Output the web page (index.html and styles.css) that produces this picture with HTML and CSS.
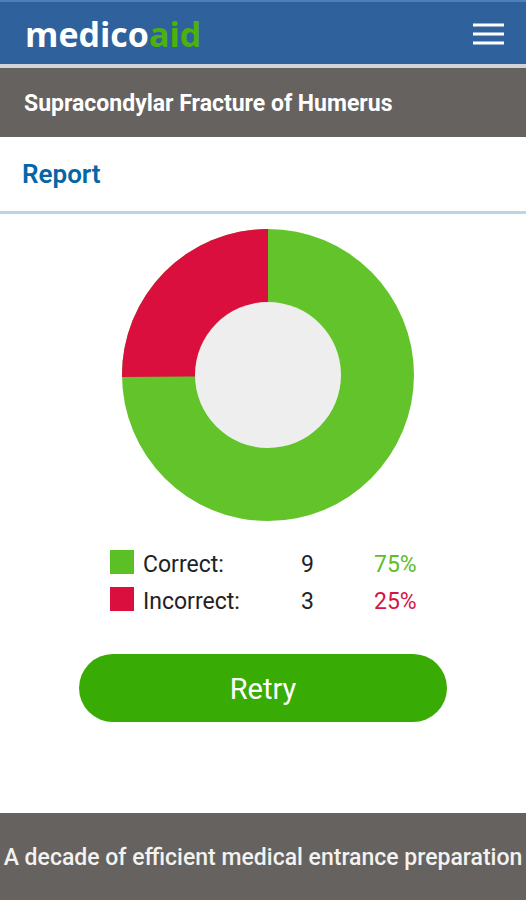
FILE: index.html
```html
<!DOCTYPE html>
<html lang="en">
<head>
    <meta charset="UTF-8">
    <meta name="viewport" content="width=device-width, initial-scale=1.0">
    <title>Medicoaid - Report</title>
    <link rel="stylesheet" href="styles.css">
</head>
<body>
    <header class="navbar">
        <a href="#" class="logo">medico<span>aid</span></a>
        <button class="menu-btn" type="button" aria-label="Menu">
            <svg width="31" height="22" viewBox="0 0 31 22">
                <path d="M0 2h31M0 11h31M0 20h31" stroke="#fff" stroke-width="3"/>
            </svg>
        </button>
    </header>

    <h1 class="topic">Supracondylar Fracture of Humerus</h1>
    <h2 class="report-title">Report</h2>

    <main class="report">
        <div class="result">
            <svg class="chart" viewBox="0 0 292 292" role="img" aria-label="75% correct, 25% incorrect">
                <circle cx="146" cy="146" r="146" fill="#62c42a"/>
                <path d="M146 146V0A146 146 0 0 0 0 148L146 147Z" fill="#db0f3d"/>
                <circle cx="146" cy="146" r="73" fill="#eeeeee"/>
            </svg>

            <table class="legend">
                <tr>
                    <td class="color"><span class="box correct"></span></td>
                    <th scope="row">Correct:</th>
                    <td class="count">9</td>
                    <td class="percent correct-text">75%</td>
                </tr>
                <tr>
                    <td class="color"><span class="box incorrect"></span></td>
                    <th scope="row">Incorrect:</th>
                    <td class="count">3</td>
                    <td class="percent incorrect-text">25%</td>
                </tr>
            </table>
        </div>

        <button class="retry-btn" type="button">Retry</button>
    </main>

    <footer class="footer">A decade of efficient medical entrance preparation</footer>
</body>
</html>
```

FILE: styles.css
```css
* {
    box-sizing: border-box;
}
body {
    margin: 0;
    min-height: 100vh;
    display: flex;
    flex-direction: column;
    font-family: Roboto, Arial, sans-serif;
    background-color: #fff;
    color: #222;
}
.navbar {
    display: flex;
    justify-content: space-between;
    align-items: center;
    height: 68px;
    padding: 2px 22px 0 25px;
    background-color: #2f629d;
    border-top: 2px solid #4c80b9;
    border-bottom: 4px solid #d3d4d8;
}
.logo {
    font-family: "Open Sans", sans-serif;
    font-size: 34px;
    font-weight: 700;
    line-height: 48px;
    color: #fff;
    text-decoration: none;
}
.logo span {
    color: #4db10c;
}
.menu-btn {
    padding: 0;
    border: none;
    background: none;
    cursor: pointer;
}
.menu-btn svg {
    display: block;
}
.topic {
    margin: 0;
    padding: 21px 24px 19px;
    font-size: 23px;
    font-weight: 700;
    line-height: 29px;
    background-color: #66625f;
    color: #fff;
}
.report-title {
    margin: 0;
    padding: 20px 22px;
    font-size: 26px;
    font-weight: 600;
    line-height: 34px;
    color: #0566a6;
    border-bottom: 3px solid #bcd5e6;
}
.report {
    flex: 1;
    padding: 15px 0 32px;
}
.result {
    width: 316px;
    margin: 0 auto;
    padding-left: 10px;
    box-sizing: content-box;
}
.chart {
    display: block;
    width: 292px;
    margin: 0 auto 25px;
}
.legend {
    width: 100%;
    border-collapse: collapse;
    table-layout: fixed;
    font-size: 23px;
    line-height: 37px;
}
.legend td,
.legend th {
    padding: 0;
    font-weight: 400;
    text-align: left;
}
.legend .color {
    width: 33px;
    padding-bottom: 5px;
}
.legend th {
    width: 158px;
}
.legend .count {
    width: 73px;
}
.box {
    display: block;
    width: 24px;
    height: 24px;
}
.correct {
    background-color: #5bc026;
}
.incorrect {
    background-color: #db0f3d;
}
.correct-text {
    color: #5bc026;
}
.incorrect-text {
    color: #d41442;
}
.retry-btn {
    display: block;
    width: 70%;
    height: 68px;
    margin: 34px auto 0;
    padding: 2px 0 0;
    border: none;
    border-radius: 34px;
    background-color: #38ab05;
    color: #fff;
    font-family: inherit;
    font-size: 29px;
    cursor: pointer;
}
.footer {
    padding: 29px 0 26px;
    background-color: #66625f;
    color: #f3f2f0;
    font-size: 23px;
    font-weight: 500;
    line-height: 32px;
    text-align: center;
}
```
